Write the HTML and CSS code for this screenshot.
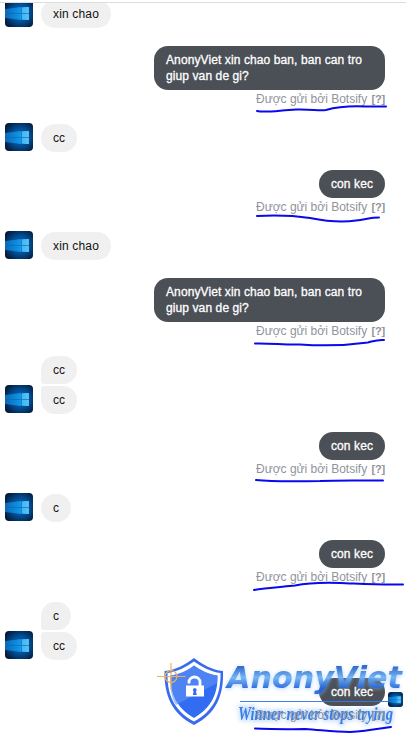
FILE: index.html
```
<!DOCTYPE html>
<html lang="vi">
<head>
<meta charset="utf-8">
<title>Chat</title>
<link rel="stylesheet" href="styles.css">
</head>
<body>
<svg width="0" height="0" class="defs">
  <defs>
    <linearGradient id="beam" x1="0" x2="1"><stop offset="0" stop-color="#0767b5"/><stop offset=".6" stop-color="#0b95ea"/><stop offset="1" stop-color="#45bdf5"/></linearGradient>
    <radialGradient id="night" cx=".55" cy=".5" r=".65"><stop offset="0" stop-color="#0874c8"/><stop offset=".55" stop-color="#04488a"/><stop offset="1" stop-color="#021836"/></radialGradient>
    <filter id="haze"><feGaussianBlur stdDeviation=".6"/></filter>
    <symbol id="avatar" viewBox="0 0 28 28">
      <rect width="28" height="28" fill="url(#night)"/>
      <g filter="url(#haze)">
        <path d="M0 10L16 8L24 8V21L16 21L0 19Z" fill="url(#beam)"/>
        <path d="M16 9L23.500 8V21L16 20Z" fill="#6bcbf5" opacity=".5"/>
        <path d="M0 14.500H24M16.500 8V21" stroke="#0a65ad" stroke-width=".8" opacity=".8"/>
      </g>
    </symbol>
  </defs>
</svg>
<main class="chat">
  <div class="topline"></div>

  <section class="in">
    <svg class="avatar"><use href="#avatar"/></svg>
    <div class="stack"><p class="bubble hi">xin chao</p></div>
  </section>
  <section class="out">
    <p class="bubble long"><span>AnonyViet xin chao ban, ban can tro</span><br><span>giup van de gi?</span></p>
    <div class="via"><span>Được gửi bởi Botsify</span><b>[?]</b>
      <svg class="mark" viewBox="250 90 156 40"><path d="M257 111C266 113 281 110 296 109.500C312 109 318 111 326 110C340 106 352 106 365 106.500L386 106.500"/></svg></div>
  </section>

  <section class="in">
    <svg class="avatar"><use href="#avatar"/></svg>
    <div class="stack"><p class="bubble cc">cc</p></div>
  </section>
  <section class="out">
    <p class="bubble short"><span>con kec</span></p>
    <div class="via"><span>Được gửi bởi Botsify</span><b>[?]</b>
      <svg class="mark" viewBox="250 198 156 40"><path d="M257 216C275 215 293 215.500 310 218C325 221 341 223 356 220.500C367 219 372 217.500 379 217.500"/></svg></div>
  </section>

  <section class="in">
    <svg class="avatar"><use href="#avatar"/></svg>
    <div class="stack"><p class="bubble hi">xin chao</p></div>
  </section>
  <section class="out">
    <p class="bubble long"><span>AnonyViet xin chao ban, ban can tro</span><br><span>giup van de gi?</span></p>
    <div class="via"><span>Được gửi bởi Botsify</span><b>[?]</b>
      <svg class="mark" viewBox="250 322 156 40"><path d="M255 343.500C270 343 285 345 300 344.500C322 346 350 345 368 342.500C374 341 377 339.500 384 340"/></svg></div>
  </section>

  <section class="in">
    <svg class="avatar"><use href="#avatar"/></svg>
    <div class="stack"><p class="bubble cc first">cc</p><p class="bubble cc last">cc</p></div>
  </section>
  <section class="out">
    <p class="bubble short"><span>con kec</span></p>
    <div class="via"><span>Được gửi bởi Botsify</span><b>[?]</b>
      <svg class="mark" viewBox="250 460 156 40"><path d="M256 480C270 481.500 295 481.500 320 481C340 480 350 480.500 383 480.500"/></svg></div>
  </section>

  <section class="in">
    <svg class="avatar"><use href="#avatar"/></svg>
    <div class="stack"><p class="bubble c">c</p></div>
  </section>
  <section class="out">
    <p class="bubble short"><span>con kec</span></p>
    <div class="via"><span>Được gửi bởi Botsify</span><b>[?]</b>
      <svg class="mark" viewBox="250 568 156 40"><path d="M254 590C264 588 280 587 295 585.500C310 582.500 325 582.500 340 583C365 584 380 585 403 584.500"/></svg></div>
  </section>

  <section class="in">
    <svg class="avatar"><use href="#avatar"/></svg>
    <div class="stack"><p class="bubble c first">c</p><p class="bubble cc last">cc</p></div>
  </section>
  <section class="out">
    <p class="bubble short"><span>con kec</span></p>
    <div class="via over"><span>Được gửi bởi Botsify</span><b>[?]</b>
      <svg class="mark" viewBox="250 706 156 40"><path d="M255 728.500C275 729 290 729.500 305 729C325 730.500 335 732 350 732C368 731 380 728.500 391 727"/></svg></div>
    <svg class="seen"><use href="#avatar"/></svg>
  </section>

  <svg class="watermark" viewBox="150 650 256 84">
    <defs>
      <linearGradient id="brand" x1="0" y1="0" x2="0" y2="1"><stop offset=".2" stop-color="#2a63c8"/><stop offset=".5" stop-color="#6cb2f5"/><stop offset=".8" stop-color="#2868dc"/></linearGradient>
      <filter id="glow" x="-10%" y="-30%" width="120%" height="170%"><feGaussianBlur stdDeviation="2.200"/></filter>
    </defs>
    <path d="M194 658C202 664 212 670 223 671C224 695 216 714 194 725C172 714 164 695 164.500 671C176 670 186 664 194 658Z" fill="#2c62ee"/>
    <path d="M194 661.500C202 667 211 672 220.500 673C221 694 214 711 194 721.500C174 711 167 694 167.500 673C177 672 186 667 194 661.500Z" fill="#fff"/>
    <path d="M194 665.500C202 671 209 674.500 217.500 675.500C218 694 211 708 194 718C177 708 170 694 170.500 675.500C179 674.500 187 671 194 665.500Z" fill="#2563f3"/>
    <path d="M194 665.500C202 671 209 674.500 217.500 675.500L217 683L176 705C171 697 170 687 170.500 675.500C179 674.500 187 671 194 665.500Z" fill="#5a8df5" opacity=".6"/>
    <path d="M189 683.500V682A5.500 5 0 0 1 200 682V687" fill="none" stroke="#fff" stroke-width="2.800"/>
    <rect x="186" y="685.500" width="18" height="11" fill="#fff"/>
    <path d="M194.800 688A2 2 0 0 1 196 691.500L196.800 695H192.800L193.600 691.500A2 2 0 0 1 194.800 688Z" fill="#2563f3"/>
    <g fill="none" stroke="#e9ad55" stroke-width="1.200"><circle cx="171" cy="676.500" r="6"/><path d="M157 676.500H185.500M171 663V690"/></g>
    <g class="brand">
      <text x="227" y="689" textLength="175" lengthAdjust="spacingAndGlyphs" fill="#8bbcff" opacity=".65" filter="url(#glow)">AnonyViet</text>
      <text x="227" y="688" textLength="175" lengthAdjust="spacingAndGlyphs" fill="url(#brand)">AnonyViet</text>
    </g>
    <path d="M240 701.500H401" stroke="#397be6" stroke-width="1.200"/>
    <g class="slogan">
      <text x="238" y="720" textLength="155" lengthAdjust="spacingAndGlyphs" fill="#72adff" stroke="#72adff" stroke-width="3" opacity=".45" filter="url(#glow)">Winner never stops trying</text>
      <text x="238" y="720" textLength="155" lengthAdjust="spacingAndGlyphs" fill="#2f76df">Winner never stops trying</text>
    </g>
  </svg>
</main>
</body>
</html>
```
FILE: styles.css
```
* { box-sizing: border-box; }
body { margin: 0; background: #fff; font: 12px/16px "Liberation Sans", Arial, sans-serif; }
.defs { position: absolute; }
.chat { position: relative; width: 406px; height: 734px; overflow: hidden; }
.topline { position: absolute; z-index: 2; top: 0; left: 0; width: 100%; height: 3px; background: #fff; border-bottom: 1px solid #dcdddf; }
.in { display: flex; align-items: flex-end; gap: 8px; padding-left: 5px; margin-bottom: 18px; }
.avatar { width: 28px; height: 28px; border-radius: 4px; margin: -1px 0 1px; flex: none; }
.stack { display: flex; flex-direction: column; align-items: flex-start; gap: 2px; }
.bubble { margin: 0; padding: 6px 0 6px 12px; border-radius: 14px; white-space: nowrap; }
.in .bubble { background: #f0f0f0; color: #111; }
.hi { width: 70px; letter-spacing: .16px; }
.cc { width: 36px; }
.c { width: 30px; }
.in .first { border-bottom-left-radius: 3px; }
.in .last { border-top-left-radius: 3px; }
.out { position: relative; display: flex; flex-direction: column; align-items: flex-end; padding-right: 21px; margin-bottom: 16px; }
.out .bubble { background: #4b4f56; color: #fff; -webkit-text-stroke: .3px #fff; }
.out .bubble span { position: relative; z-index: 3; }
.long { width: 231px; letter-spacing: .1px; }
.short { width: 66px; letter-spacing: .1px; }
.via { position: relative; display: flex; justify-content: space-between; width: 129px; height: 18px; padding-top: 1px; color: #90949c; white-space: nowrap; }
.over { z-index: 2; }
.via b { font-size: 11px; letter-spacing: -.2px; }
.mark { position: absolute; z-index: 4; top: 0; left: -6px; width: 156px; height: 40px; fill: none; stroke: #0909ee; stroke-width: 2; stroke-linecap: round; }
.seen { position: absolute; z-index: 2; left: 388px; top: 14px; width: 15px; height: 15px; border-radius: 3px; }
.watermark { position: absolute; z-index: 1; left: 150px; top: 650px; width: 256px; height: 84px; opacity: .94; }
.brand { font: italic bold 30px "DejaVu Sans", Verdana, sans-serif; }
.slogan { font: italic bold 19px "Liberation Serif", "Times New Roman", serif; }
```
